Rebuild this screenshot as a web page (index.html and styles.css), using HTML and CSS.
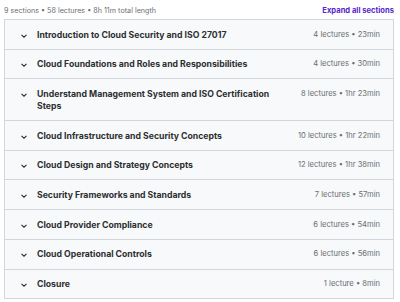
FILE: index.html
```html
<!doctype html>
<html lang="en">
<head>
  <meta charset="utf-8">
  <title>Course content</title>
  <link rel="stylesheet" href="styles.css">
</head>
<body>
  <div class="curriculum">
    <div class="summary">
      <span class="stats">9 sections • 58 lectures • 8h 11m total length</span>
      <span class="expand">Expand all sections</span>
    </div>
    <div class="sections">
      <div class="section">
        <span class="chev"><svg width="8" height="8" viewBox="0 0 8 8"><path d="M1.5 2.8 L4 5.2 L6.5 2.8" fill="none" stroke="#2d2f31" stroke-width="1.1"/></svg></span>
        <span class="title">Introduction to Cloud Security and ISO 27017</span>
        <span class="meta">4 lectures • 23min</span>
      </div>
      <div class="section">
        <span class="chev"><svg width="8" height="8" viewBox="0 0 8 8"><path d="M1.5 2.8 L4 5.2 L6.5 2.8" fill="none" stroke="#2d2f31" stroke-width="1.1"/></svg></span>
        <span class="title">Cloud Foundations and Roles and Responsibilities</span>
        <span class="meta">4 lectures • 30min</span>
      </div>
      <div class="section">
        <span class="chev"><svg width="8" height="8" viewBox="0 0 8 8"><path d="M1.5 2.8 L4 5.2 L6.5 2.8" fill="none" stroke="#2d2f31" stroke-width="1.1"/></svg></span>
        <span class="title">Understand Management System and ISO Certification Steps</span>
        <span class="meta">8 lectures • 1hr 23min</span>
      </div>
      <div class="section">
        <span class="chev"><svg width="8" height="8" viewBox="0 0 8 8"><path d="M1.5 2.8 L4 5.2 L6.5 2.8" fill="none" stroke="#2d2f31" stroke-width="1.1"/></svg></span>
        <span class="title">Cloud Infrastructure and Security Concepts</span>
        <span class="meta">10 lectures • 1hr 22min</span>
      </div>
      <div class="section">
        <span class="chev"><svg width="8" height="8" viewBox="0 0 8 8"><path d="M1.5 2.8 L4 5.2 L6.5 2.8" fill="none" stroke="#2d2f31" stroke-width="1.1"/></svg></span>
        <span class="title">Cloud Design and Strategy Concepts</span>
        <span class="meta">12 lectures • 1hr 38min</span>
      </div>
      <div class="section">
        <span class="chev"><svg width="8" height="8" viewBox="0 0 8 8"><path d="M1.5 2.8 L4 5.2 L6.5 2.8" fill="none" stroke="#2d2f31" stroke-width="1.1"/></svg></span>
        <span class="title">Security Frameworks and Standards</span>
        <span class="meta">7 lectures • 57min</span>
      </div>
      <div class="section">
        <span class="chev"><svg width="8" height="8" viewBox="0 0 8 8"><path d="M1.5 2.8 L4 5.2 L6.5 2.8" fill="none" stroke="#2d2f31" stroke-width="1.1"/></svg></span>
        <span class="title">Cloud Provider Compliance</span>
        <span class="meta">6 lectures • 54min</span>
      </div>
      <div class="section">
        <span class="chev"><svg width="8" height="8" viewBox="0 0 8 8"><path d="M1.5 2.8 L4 5.2 L6.5 2.8" fill="none" stroke="#2d2f31" stroke-width="1.1"/></svg></span>
        <span class="title">Cloud Operational Controls</span>
        <span class="meta">6 lectures • 56min</span>
      </div>
      <div class="section">
        <span class="chev"><svg width="8" height="8" viewBox="0 0 8 8"><path d="M1.5 2.8 L4 5.2 L6.5 2.8" fill="none" stroke="#2d2f31" stroke-width="1.1"/></svg></span>
        <span class="title">Closure</span>
        <span class="meta">1 lecture • 8min</span>
      </div>
    </div>
  </div>
</body>
</html>
```

FILE: styles.css
```css
body {
  margin: 0;
  background: #ffffff;
  font-family: Inter, "Noto Sans", sans-serif;
  color: #2d2f31;
}
.curriculum {
  padding: 2px 6px 0 4px;
}
.summary {
  display: flex;
  justify-content: space-between;
  align-items: center;
  height: 17px;
  font-size: 7.2px;
}
.stats {
  color: #6a6f73;
}
.expand {
  color: #5624d0;
  font-weight: 700;
  font-size: 7.6px;
}
.sections {
  border: 1px solid #d1d7dc;
  border-bottom: none;
}
.section {
  display: flex;
  align-items: center;
  background: #f7f9fa;
  border-bottom: 1px solid #d1d7dc;
  padding: 8.5px 13px 8.2px 15px;
  min-height: 12px;
}
.chev {
  display: flex;
  width: 8px;
  margin-right: 9px;
  align-self: flex-start;
  padding-top: 3px;
}
.title {
  flex: 1;
  max-width: 240px;
  font-weight: 700;
  font-size: 8.7px;
  line-height: 12px;
}
.meta {
  margin-left: auto;
  align-self: flex-start;
  font-size: 7.6px;
  line-height: 12px;
  color: #6a6f73;
  white-space: nowrap;
}
```
